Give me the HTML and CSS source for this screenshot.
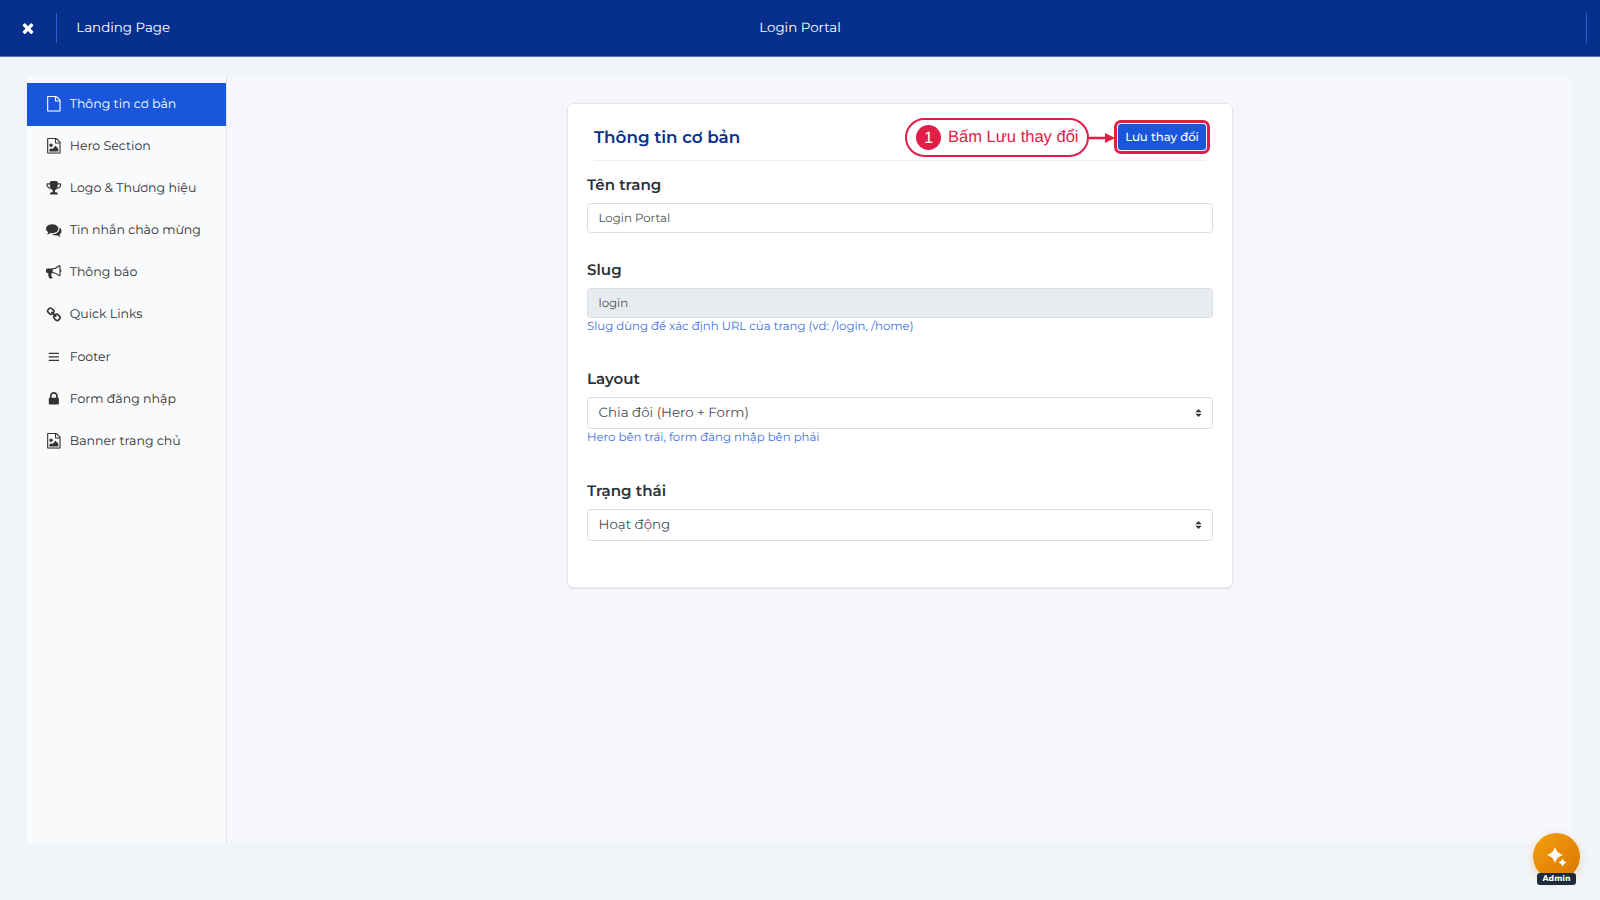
FILE: index.html
```html
<!DOCTYPE html>
<html lang="vi">
<head>
<meta charset="utf-8">
<title>Landing Page</title>
<link rel="stylesheet" href="styles.css">
</head>
<body>
<svg class="defs" aria-hidden="true">
  <symbol id="file" viewBox="0 0 1792 1792"><path d="M1596 380q28 28 48 76t20 88v1152q0 40-28 68t-68 28h-1344q-40 0-68-28t-28-68v-1600q0-40 28-68t68-28h896q40 0 88 20t76 48zm-444-244v376h376q-10-29-22-41l-313-313q-12-12-41-22zm384 1528v-1024h-416q-40 0-68-28t-28-68v-416h-768v1536h1280z"/></symbol>
  <symbol id="image" viewBox="0 0 1792 1792"><path d="M1596 380q28 28 48 76t20 88v1152q0 40-28 68t-68 28h-1344q-40 0-68-28t-28-68v-1600q0-40 28-68t68-28h896q40 0 88 20t76 48zm-444-244v376h376q-10-29-22-41l-313-313q-12-12-41-22zm384 1528v-1024h-416q-40 0-68-28t-28-68v-416h-768v1536h1280zm-128-448v320h-1024v-192l192-192 128 128 384-384zm-832-192q-80 0-136-56t-56-136 56-136 136-56 136 56 56 136-56 136-136 56z"/></symbol>
  <symbol id="trophy" viewBox="0 0 1792 1792"><path d="M522 883q-74-162-74-371h-256v96q0 78 94.500 162t235.500 113zm1078-275v-96h-256q0 209-74 371 141-29 235.500-113t94.500-162zm128-128v128q0 71-41.500 143t-112 130-173 97.500-215.500 44.500q-42 54-95 95-38 34-52.500 72.500t-14.500 89.500q0 54 30.500 91t97.500 37q75 0 133.500 45.500t58.500 114.500v64q0 14-9 23t-23 9h-832q-14 0-23-9t-9-23v-64q0-69 58.500-114.500t133.500-45.500q67 0 97.500-37t30.500-91q0-51-14.500-89.500t-52.500-72.500q-53-41-95-95-113-5-215.500-44.500t-173-97.500-112-130-41.500-143v-128q0-40 28-68t68-28h288v-96q0-66 47-113t113-47h576q66 0 113 47t47 113v96h288q40 0 68 28t28 68z"/></symbol>
  <symbol id="comments" viewBox="0 0 1792 1792"><path d="M1408 768q0 139-94 257t-256.500 186.500-353.500 68.500q-86 0-176-16-124 88-278 128-36 9-86 16h-3q-11 0-20.500-8t-11.500-21q-1-3-1-6.500t.5-6.500 2-6l2.500-5 3.500-5.500 4-5 4.500-5 4-4.500q5-6 23-25t26-29.500 22.500-29 25-38.500 20.500-44q-124-72-195-177t-71-224q0-139 94-257t256.500-186.500 353.500-68.500 353.500 68.500 256.500 186.500 94 257zm384 256q0 120-71 224.500t-195 176.500q10 24 20.500 44t25 38.500 22.500 29 26 29.500 23 25q1 1 4 4.500t4.500 5 4 5 3.500 5.500l2.500 5 2 6 .5 6.500-1 6.500q-3 14-13 22t-22 7q-50-7-86-16-154-40-278-128-90 16-176 16-271 0-472-132 58 4 88 4 161 0 309-45t264-129q125-92 192-212t67-254q0-77-23-152 129 71 204 178t75 230z"/></symbol>
  <symbol id="bullhorn" viewBox="0 0 1792 1792"><path d="M1664 640q53 0 90.500 37.500t37.500 90.500-37.500 90.500-90.500 37.500v384q0 52-38 90t-90 38q-417-347-812-380-58 19-91 66t-31 100.500 40 92.500q-20 33-23 65.500t6 58 33.500 55 48 50 61.500 50.500q-29 58-111.500 83t-168.500 11.500-132-55.500q-7-23-29.500-87.500t-32-94.500-23-89-15-101 3.500-98.500 22-110.500h-122q-66 0-113-47t-47-113v-192q0-66 47-113t113-47h480q435 0 896-384 52 0 90 38t38 90v384zm-128 604v-954q-394 302-768 343v270q377 42 768 341z"/></symbol>
  <symbol id="chain" viewBox="0 0 1792 1792"><path d="M1520 1216q0-40-28-68l-208-208q-28-28-68-28-42 0-72 32 3 3 19 18.500t21.500 21.500 15 19 13 25.500 3.500 27.500q0 40-28 68t-68 28q-15 0-27.500-3.500t-25.500-13-19-15-21.500-21.500-18.500-19q-33 31-33 73 0 40 28 68l206 207q27 27 68 27 40 0 68-26l147-146q28-28 28-67zm-703-705q0-40-28-68l-206-207q-28-28-68-28-39 0-68 27l-147 146q-28 28-28 67 0 40 28 68l208 208q27 27 68 27 42 0 72-31-3-3-19-18.500t-21.500-21.500-15-19-13-25.500-3.500-27.500q0-40 28-68t68-28q15 0 27.500 3.500t25.500 13 19 15 21.500 21.500 18.500 19q33-31 33-73zm895 705q0 120-85 203l-147 146q-83 83-203 83-121 0-204-85l-206-207q-83-83-83-203 0-123 88-209l-88-88q-86 88-208 88-120 0-204-84l-208-208q-84-84-84-204t85-203l147-146q83-83 203-83 121 0 204 85l206 207q83 83 83 203 0 123-88 209l88 88q86-88 208-88 120 0 204 84l208 208q84 84 84 204z"/></symbol>
  <symbol id="bars" viewBox="0 0 16 16"><path d="M2.800 3.700h10.400v1.400H2.800zM2.800 7.300h10.400v1.400H2.800zM2.800 10.900h10.400v1.400H2.800z"/></symbol>
  <symbol id="lock" viewBox="0 0 1792 1792"><path d="M640 768h512v-192q0-106-75-181t-181-75-181 75-75 181v192zm832 96v576q0 40-28 68t-68 28h-960q-40 0-68-28t-28-68v-576q0-40 28-68t68-28h32v-192q0-184 132-316t316-132 316 132 132 316v192h32q40 0 68 28t28 68z"/></symbol>
  <symbol id="times" viewBox="0 0 1792 1792"><path d="M1490 1322q0 40-28 68l-136 136q-28 28-68 28t-68-28l-294-294-294 294q-28 28-68 28t-68-28l-136-136q-28-28-28-68t28-68l294-294-294-294q-28-28-28-68t28-68l136-136q28-28 68-28t68 28l294 294 294-294q28-28 68-28t68 28l136 136q28 28 28 68t-28 68l-294 294 294 294q28 28 28 68z"/></symbol>
  <symbol id="caret" viewBox="0 0 4 5"><path d="M2 0L0 2h4zM2 5L0 3h4z"/></symbol>
</svg>

<header class="topbar">
  <svg class="close"><use href="#times"/></svg>
  <span class="divider"></span>
  <span class="crumb">Landing Page</span>
  <span class="page-name">Login Portal</span>
  <span class="divider divider-end"></span>
</header>

<div class="workspace">
  <nav class="sidebar">
    <a class="item active"><svg class="icon"><use href="#file"/></svg><span class="item-text">Thông tin cơ bản</span></a>
    <a class="item"><svg class="icon"><use href="#image"/></svg><span class="item-text">Hero Section</span></a>
    <a class="item"><svg class="icon"><use href="#trophy"/></svg><span class="item-text">Logo &amp; Thương hiệu</span></a>
    <a class="item"><svg class="icon"><use href="#comments"/></svg><span class="item-text">Tin nhắn chào mừng</span></a>
    <a class="item"><svg class="icon"><use href="#bullhorn"/></svg><span class="item-text">Thông báo</span></a>
    <a class="item"><svg class="icon"><use href="#chain"/></svg><span class="item-text">Quick Links</span></a>
    <a class="item"><svg class="icon"><use href="#bars"/></svg><span class="item-text">Footer</span></a>
    <a class="item"><svg class="icon"><use href="#lock"/></svg><span class="item-text">Form đăng nhập</span></a>
    <a class="item"><svg class="icon"><use href="#image"/></svg><span class="item-text">Banner trang chủ</span></a>
  </nav>

  <main class="content">
    <section class="card">
      <div class="card-head">
        <h1 class="title">Thông tin cơ bản</h1>
        <div class="action">
          <button class="save">Lưu thay đổi</button>
          <div class="callout">
            <div class="bubble"><span class="step">1</span><span class="hint">Bấm Lưu thay đổi</span></div>
            <svg class="arrow" viewBox="0 0 26 12"><path d="M0 4.800h16V1L26 6 16 11V7.200H0z"/></svg>
          </div>
        </div>
      </div>
      <div class="field f-name">
        <label class="label">Tên trang</label>
        <div class="control"><span>Login Portal</span></div>
      </div>
      <div class="field f-slug">
        <label class="label">Slug</label>
        <div class="control disabled"><span>login</span></div>
        <small class="help">Slug dùng để xác định URL của trang (vd: /login, /home)</small>
      </div>
      <div class="field f-layout">
        <label class="label">Layout</label>
        <div class="control select"><span>Chia đôi (Hero + Form)</span><svg class="caret"><use href="#caret"/></svg></div>
        <small class="help">Hero bên trái, form đăng nhập bên phải</small>
      </div>
      <div class="field f-status">
        <label class="label">Trạng thái</label>
        <div class="control select"><span>Hoạt động</span><svg class="caret"><use href="#caret"/></svg></div>
      </div>
    </section>
  </main>
</div>

<div class="assistant">
  <svg class="sparkles" viewBox="0 0 20 20"><path d="M8 0Q9.700 6.300 16 8 9.700 9.700 8 16 6.300 9.700 0 8 6.300 6.300 8 0zM15.500 11.600Q16.400 14.800 19.500 15.600 16.400 16.500 15.500 19.600 14.600 16.500 11.500 15.600 14.600 14.800 15.500 11.600z"/></svg>
  <span class="role">Admin</span>
</div>
</body>
</html>
```
FILE: styles.css
```css
* { box-sizing: border-box; }
body {
  margin: 0;
  width: 1600px;
  height: 900px;
  overflow: hidden;
  background: #f1f5f9;
  font-family: Montserrat, Inter, "Noto Sans", sans-serif;
  color: #333;
  font-size: 13.400px;
  text-rendering: geometricPrecision;
}
svg { fill: currentColor; display: block; flex: none; }
span, label, small, h1 { white-space: nowrap; }
.defs { position: absolute; width: 0; height: 0; }

.topbar {
  position: relative;
  height: 57px;
  background: #07308c;
  border-bottom: 1px solid #5c77b5;
  color: #fff;
  display: flex;
  align-items: center;
  padding: 0 13px 0 20px;
}
.close { width: 16px; height: 16px; }
.divider { width: 1px; height: 30px; background: #2f5bd0; margin-left: 20px; }
.crumb { margin-left: 19.300px; }
.page-name { position: absolute; left: 0; right: 0; text-align: center; }
.divider-end { margin-left: auto; }

.workspace {
  display: flex;
  margin: 19px 27px 0;
  height: 767px;
  background: #f5f7fb;
}
.sidebar {
  width: 200px;
  padding-top: 7px;
  background: #f8fafc;
  border-right: 1px solid #e2e5ea;
}
.item {
  display: flex;
  align-items: center;
  height: 42.100px;
  padding-left: 19px;
  gap: 8px;
  font-size: 12.550px;
}
.icon { width: 15.700px; height: 15.700px; margin-bottom: 1px; }
.active { background: #1a56db; color: #fff; height: 43px; margin-bottom: -.500px; }

.content { flex: 1; padding: 27px 0 0 340px; }
.card {
  width: 666px;
  height: 485px;
  padding: 0 19px;
  background: #fff;
  border: 1px solid #e3e6ea;
  border-radius: 6px;
  box-shadow: 0 1px 2px rgba(0, 0, 0, .08);
}
.card-head {
  display: flex;
  align-items: center;
  justify-content: space-between;
  height: 57px;
  padding-top: 10px;
  margin: 0 7px;
  border-bottom: 1px solid #eceef1;
}
.title { margin: 0; padding-top: 2px; font-size: 16.750px; font-weight: 600; color: #07308c; }
.action { position: relative; }
.save {
  display: block;
  width: 88px;
  height: 26px;
  padding: 0;
  border: 0;
  border-radius: 3px;
  background: #1a56db;
  color: #fff;
  font: 500 11.700px Montserrat, Inter, sans-serif;
  text-rendering: geometricPrecision;
  outline: 3px solid #e11d48;
  outline-offset: 1px;
}
.callout {
  position: absolute;
  right: 91px;
  top: -6px;
  display: flex;
  align-items: center;
  color: #e11d48;
}
.bubble {
  display: flex;
  align-items: center;
  gap: 7px;
  width: 184px;
  height: 39px;
  padding-left: 9px;
  border: 2px solid #e11d48;
  border-radius: 19.500px;
  background: #fff;
  font: 16.550px "Liberation Sans", Arial, sans-serif;
}
.hint { padding-bottom: 1px; }
.step {
  width: 25px;
  height: 25px;
  border-radius: 50%;
  background: #e11d48;
  color: #fff;
  line-height: 25px;
  text-align: center;
}
.arrow { width: 26px; height: 12px; }

.label { display: block; font-size: 15.100px; font-weight: 600; line-height: 20px; color: #2b3137; }
.control {
  display: flex;
  align-items: center;
  justify-content: space-between;
  height: 30px;
  margin-top: 8px;
  padding: 0 10px 0 10.500px;
  border: 1px solid #d8dde6;
  border-radius: 4px;
  background: #fff;
  color: #495057;
  font-size: 11.750px;
}
.disabled { background: #e9ecef; }
.select { height: 32px; font-size: 13.400px; }
.caret { width: 7px; height: 8px; color: #343a40; }
.help { display: block; font-size: 11.700px; line-height: 17px; color: #3f6fe0; }
.f-name { margin-top: 14px; height: 85px; }
.f-slug { height: 109px; }
.f-layout { height: 112px; }

.assistant {
  position: absolute;
  left: 1533px;
  top: 833px;
  width: 47px;
  height: 47px;
  border-radius: 50%;
  background: linear-gradient(135deg, #f59e0b, #d97706);
  box-shadow: 0 3px 10px rgba(217, 119, 6, .25);
  color: #fff;
}
.sparkles { width: 20px; height: 20px; margin: 14px 0 0 14px; }
.role {
  position: absolute;
  left: 4px;
  top: 40px;
  width: 39px;
  height: 12px;
  border-radius: 3px;
  background: #1e293b;
  font: bold 7.800px/12px "DejaVu Sans", sans-serif;
  text-align: center;
}
```
